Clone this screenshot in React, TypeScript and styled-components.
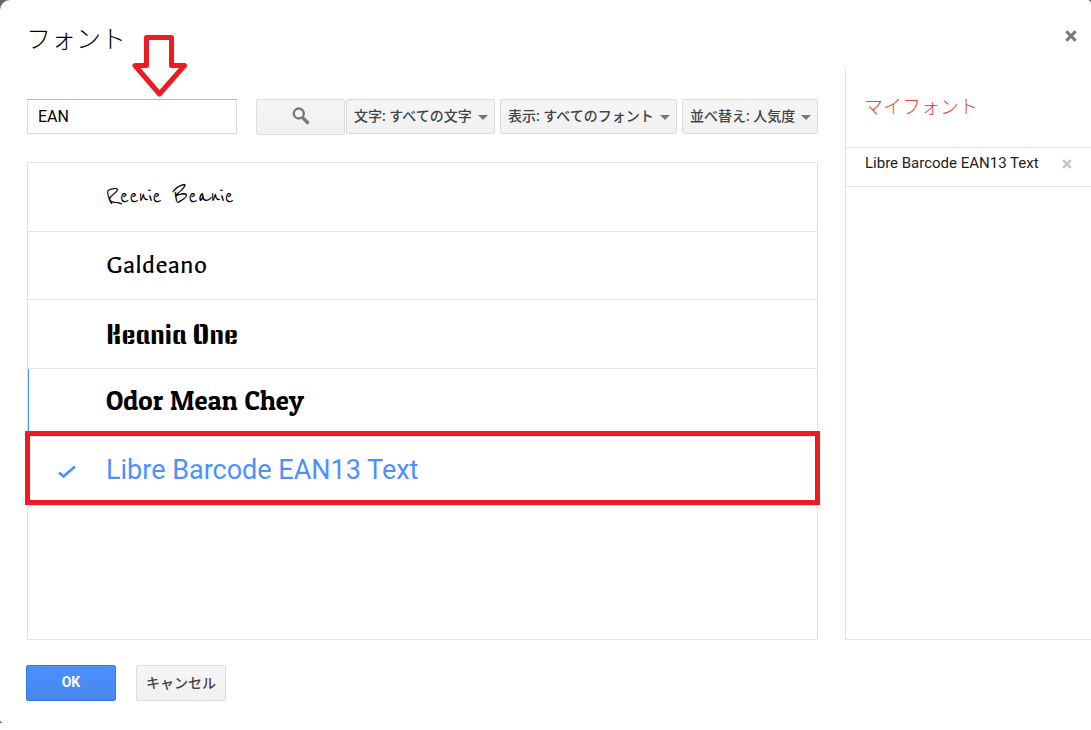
import React from "react";
import styled, { createGlobalStyle } from "styled-components";

const Global = createGlobalStyle`
  * { box-sizing: border-box; }
  body { margin: 0; background: #fff; color: #000; font-family: Roboto, "Noto Sans CJK JP", sans-serif; }
  button, input, select { font: inherit; margin: 0; }
`;

const Backdrop = styled.div`
  background: #666366;
`;

const Dialog = styled.main`
  display: grid;
  grid-template-columns: minmax(0, 1fr) 246px;
  column-gap: 27px;
  min-height: 723px;
  background: #fff;
  border-radius: 10px 4px 0 4px;
`;

const Header = styled.header`
  grid-column: 1 / -1;
  height: 69px;
  padding: 20px 14px 0 26px;
  display: flex;
  justify-content: space-between;
`;

const Title = styled.h1`
  margin: 0;
  font-size: 25px;
  line-height: 40px;
  font-weight: 300;
`;

const IconButton = styled.button<{ $color: string }>`
  display: flex;
  align-items: center;
  align-self: flex-start;
  height: 32px;
  padding: 0;
  border: 0;
  background: none;
  color: ${(p) => p.$color};
`;

const Picker = styled.section`
  padding: 30px 0 0 27px;
  display: flex;
  flex-direction: column;
`;

const Toolbar = styled.form`
  display: flex;
  gap: 5px;
  height: 36px;
  align-items: flex-start;
`;

const SearchGroup = styled.div`
  position: relative;
  flex: 1;
  min-width: 0;
  display: flex;
  gap: 19px;
  margin-right: -4px;
`;

const SearchInput = styled.input`
  flex: 1;
  min-width: 0;
  height: 35px;
  padding: 0 10px;
  border: 1px solid #d9d9d9;
  border-top-color: #b9b9b9;
  background: #fff;
  font-size: 16px;
  color: #000;
  outline: 0;
`;

const Button = styled.button<{ $primary?: boolean }>`
  display: flex;
  flex: none;
  align-items: center;
  justify-content: center;
  width: 90px;
  height: 36px;
  padding: 0 0 2px;
  border: 1px solid ${(p) => (p.$primary ? "#3079ed" : "#dcdcdc")};
  border-radius: 2px;
  background: ${(p) =>
    p.$primary
      ? "linear-gradient(#4d90fe, #4787ed)"
      : "linear-gradient(#f5f5f5, #f1f1f1)"};
  color: ${(p) => (p.$primary ? "#fff" : "#444")};
  font-size: 14px;
  font-weight: ${(p) => (p.$primary ? 700 : 500)};
`;

const SearchButton = styled(Button)`
  width: 89px;
`;

const Filter = styled.label<{ $width: number }>`
  display: grid;
  flex: none;
  align-items: center;
  width: ${(p) => p.$width}px;
  height: 35px;

  > * { grid-area: 1 / 1; }
  > svg { justify-self: end; margin: 2px 7px 0 0; pointer-events: none; }
`;

const Select = styled.select`
  appearance: none;
  width: 100%;
  height: 35px;
  padding: 0 0 2px 7px;
  border: 1px solid #dcdcdc;
  border-radius: 2px;
  background: linear-gradient(#f5f5f5, #f1f1f1);
  color: #444;
  font-size: 14px;
  font-weight: 500;
`;

const FontList = styled.ul`
  list-style: none;
  margin: 27px 0 0;
  padding: 0;
  height: 478px;
  border: 1px solid #e2e2e2;
`;

const FontRow = styled.li<{ $active?: boolean }>`
  position: relative;
  display: flex;
  align-items: center;
  height: 69px;
  padding-bottom: 2px;
  border-bottom: 1px solid #e2e2e2;
  box-shadow: ${(p) => (p.$active ? "inset 1px 0 #4d90fe" : "none")};

  &:nth-child(even) { height: 68px; }
`;

const Tick = styled.span`
  width: 78px;
  padding: 4px 0 0 30px;
  display: flex;
`;

const Sample = styled.span<{ $font: string; $color?: string }>`
  font-family: ${(p) => p.$font};
  font-size: 27px;
  color: ${(p) => p.$color ?? "#000"};
  white-space: nowrap;
`;

const Highlight = styled.span`
  position: absolute;
  inset: -6px -3px 0;
  border: 5px solid #ed1c24;
`;

const Pointer = styled.svg`
  position: absolute;
  left: 105px;
  top: -64px;
`;

const MyFonts = styled.aside`
  height: 571px;
  border: solid #e2e2e2;
  border-width: 0 0 1px 1px;
`;

const MyFontsTitle = styled.h2`
  margin: 0;
  height: 79px;
  padding: 0 18px;
  border-bottom: 1px solid #e2e2e2;
  font-size: 19px;
  line-height: 78px;
  font-weight: 300;
  color: #dd4b39;
`;

const MyFont = styled.div`
  display: flex;
  justify-content: space-between;
  height: 39px;
  padding: 0 19px;
  border-bottom: 1px solid #e2e2e2;
  font-size: 15px;
  line-height: 30px;
  color: #222;
`;

const Footer = styled.footer`
  grid-column: 1 / -1;
  display: flex;
  gap: 20px;
  padding: 25px 26px 22px;
`;

const Cross = ({ size }: { size: number }) => (
  <svg width={size} height={size} viewBox="0 0 12 12" fill="none" stroke="currentColor" strokeWidth="3">
    <path d="M1.3 1.3l9.4 9.4M10.7 1.3l-9.4 9.4" />
  </svg>
);

const Caret = () => (
  <svg width="10" height="5" viewBox="0 0 10 5" fill="#777">
    <path d="M0 0h10L5 5z" />
  </svg>
);

const filters = [
  { name: "文字", label: "文字: すべての文字", width: 149 },
  { name: "表示", label: "表示: すべてのフォント", width: 177 },
  { name: "並べ替え", label: "並べ替え: 人気度", width: 136 },
];

export default function App() {
  return (
    <>
      <Global />
      <Backdrop>
        <Dialog>
          <Header>
            <Title>フォント</Title>
            <IconButton type="button" aria-label="閉じる" $color="#777">
              <Cross size={12} />
            </IconButton>
          </Header>

          <Picker>
            <Toolbar onSubmit={(e) => e.preventDefault()}>
              <SearchGroup>
                <SearchInput aria-label="フォントを検索" defaultValue="EAN" />
                <Pointer width="55" height="62" viewBox="0 0 55 62" fill="#fff" stroke="#ed1c24" strokeWidth="5" strokeLinejoin="round">
                  <path d="M14.5 2.5h25v28h13L27.500 59 3 30.500h11.500z" />
                </Pointer>
                <SearchButton type="submit" aria-label="検索">
                  <svg width="18" height="18" viewBox="0 0 18 18" fill="none" stroke="#777">
                    <circle cx="6.8" cy="6.5" r="5" strokeWidth="2.3" />
                    <path d="M10.5 10.5l6 6" strokeWidth="3.2" />
                  </svg>
                </SearchButton>
              </SearchGroup>
              {filters.map((f) => (
                <Filter key={f.name} $width={f.width}>
                  <Select aria-label={f.name}>
                    <option>{f.label}</option>
                  </Select>
                  <Caret />
                </Filter>
              ))}
            </Toolbar>

            <FontList>
              <FontRow>
                <Tick />
                <Sample $font='"Reenie Beanie", cursive'>Reenie Beanie</Sample>
              </FontRow>
              <FontRow>
                <Tick />
                <Sample $font='Galdeano, "Noto Sans", sans-serif'>Galdeano</Sample>
              </FontRow>
              <FontRow>
                <Tick />
                <Sample $font='"Keania One", "DejaVu Sans Condensed", sans-serif'>Keania One</Sample>
              </FontRow>
              <FontRow $active>
                <Tick />
                <Sample $font='"Odor Mean Chey", "DejaVu Serif Condensed", serif'>Odor Mean Chey</Sample>
              </FontRow>
              <FontRow>
                <Tick>
                  <svg width="18" height="14" viewBox="0 0 18 14" fill="none" stroke="#4d90fe" strokeWidth="2.8">
                    <path d="M1 7.5l4.5 4L17 1.5" />
                  </svg>
                </Tick>
                <Sample $font="Roboto, sans-serif" $color="#4d90fe">Libre Barcode EAN13 Text</Sample>
                <Highlight />
              </FontRow>
            </FontList>
          </Picker>

          <MyFonts>
            <MyFontsTitle>マイフォント</MyFontsTitle>
            <MyFont>
              Libre Barcode EAN13 Text
              <IconButton type="button" aria-label="削除" $color="#c4c4c4">
                <Cross size={10} />
              </IconButton>
            </MyFont>
          </MyFonts>

          <Footer>
            <Button type="button" $primary>OK</Button>
            <Button type="button">キャンセル</Button>
          </Footer>
        </Dialog>
      </Backdrop>
    </>
  );
}
